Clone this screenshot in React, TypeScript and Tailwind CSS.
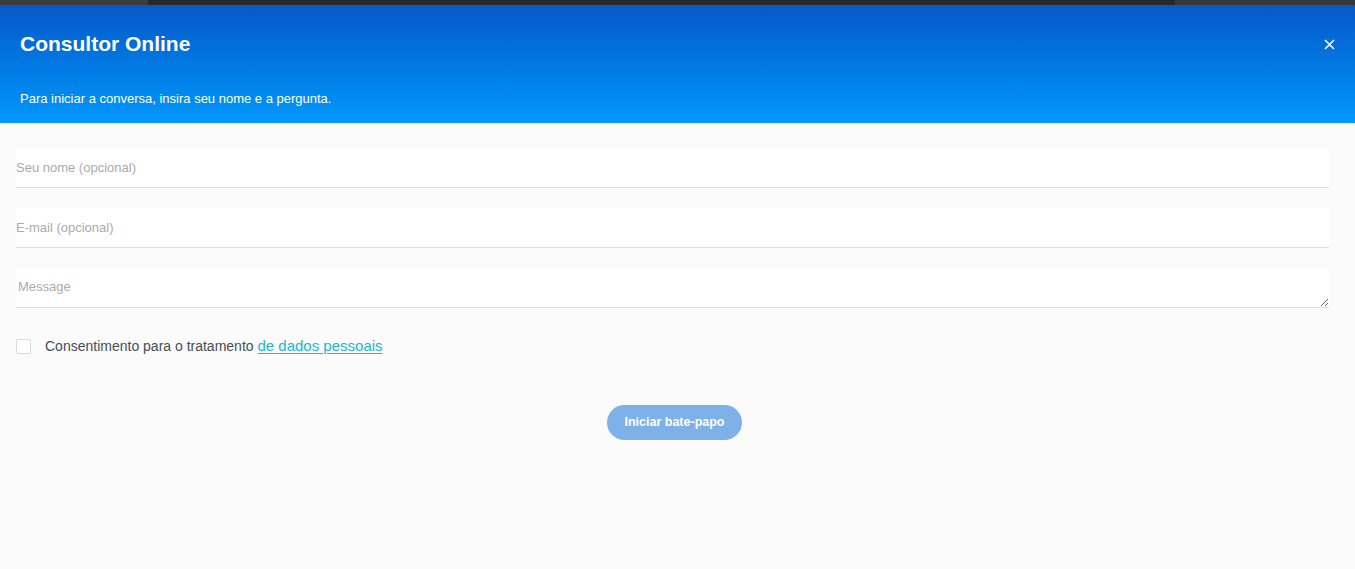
export default function App() {
  return (
    <main className="flex min-h-[569px] flex-col bg-[#fbfbfb] font-['Liberation_Sans',Arial,sans-serif]">
      <div className="flex h-[5px]">
        <div className="w-[148px] bg-[#3c3c3e]" />
        <div className="flex-1 bg-[#27282b]" />
        <div className="w-[180px] bg-[#36373a]" />
      </div>
      <header className="h-[118px] bg-gradient-to-b from-[#0758c8] to-[#0298fd] px-5 text-white">
        <div className="flex items-center justify-between pt-[26px]">
          <h1 className="text-[21px] font-bold leading-[26px]">Consultor Online</h1>
          <button className="mr-[-2px] flex h-4 w-4 items-center justify-center">
            <svg width="11" height="11" viewBox="0 0 11 11" stroke="white" strokeWidth="1.6">
              <path d="M1 1L10 10M10 1L1 10" />
            </svg>
          </button>
        </div>
        <p className="mt-[34px] text-[13px] leading-4">Para iniciar a conversa, insira seu nome e a pergunta.</p>
      </header>

      <form className="flex flex-col px-4 pt-[25px]">
        <input
          placeholder="Seu nome (opcional)"
          className="h-[40px] w-[1313px] rounded-t-[3px] border-b border-[#dcdcdc] bg-white px-0 text-[13px] outline-none placeholder:text-[#aaaaaa]"
        />
        <input
          placeholder="E-mail (opcional)"
          className="mt-5 h-[40px] w-[1313px] rounded-t-[3px] border-b border-[#dcdcdc] bg-white px-0 text-[13px] outline-none placeholder:text-[#aaaaaa]"
        />
        <textarea
          placeholder="Message"
          className="mt-5 h-[40px] w-[1313px] resize-y rounded-t-[3px] border-b border-[#dcdcdc] bg-white px-[2px] pt-[11px] text-[13px] leading-4 outline-none placeholder:text-[#aaaaaa]"
        />

        <label className="mt-[27px] flex items-center gap-[14px] text-[14px] text-[#464d5a]">
          <span className="h-[15px] w-[15px] rounded-[2px] border border-[#dadada] bg-white" />
          <span>
            Consentimento para o tratamento{" "}
            <a className="text-[15px] text-[#23b5d3] underline underline-offset-2">de dados pessoais</a>
          </span>
        </label>

        <div className="mt-[47px] flex justify-center">
          <button
            type="button"
            className="ml-[-6px] h-[35px] w-[135px] rounded-full bg-[#7eb1e8] text-[12.5px] font-bold text-white"
          >
            Iniciar bate-papo
          </button>
        </div>
      </form>
    </main>
  );
}
